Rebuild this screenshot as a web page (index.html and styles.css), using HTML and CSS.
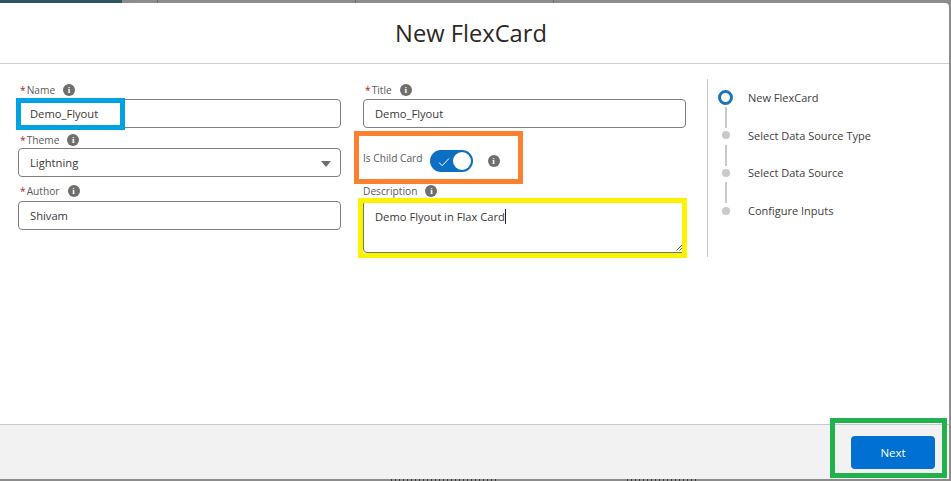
FILE: index.html
```html
<!DOCTYPE html>
<html lang="en">
<head>
<meta charset="utf-8">
<title>New FlexCard</title>
<link rel="stylesheet" href="styles.css">
</head>
<body>
<div class="backdrop">
  <div class="tabs">
    <span class="tab tab-active"></span>
    <span class="tab tab-short"></span>
    <span class="tab tab-wide"></span>
    <span class="tab tab-wide"></span>
    <span class="tab"></span>
  </div>
  <main class="modal">
    <header class="modal-header"><h1>New FlexCard</h1></header>
    <section class="modal-body">
      <div class="column">
        <div class="field">
          <div class="label"><span class="req">*</span>Name<span class="info">i</span></div>
          <div class="input">Demo_Flyout</div>
        </div>
        <div class="field field-theme">
          <div class="label"><span class="req">*</span>Theme<span class="info">i</span></div>
          <div class="input select">Lightning<span class="caret"></span></div>
        </div>
        <div class="field field-author">
          <div class="label"><span class="req">*</span>Author<span class="info">i</span></div>
          <div class="input">Shivam</div>
        </div>
      </div>
      <div class="column">
        <div class="field">
          <div class="label"><span class="req">*</span>Title<span class="info">i</span></div>
          <div class="input">Demo_Flyout</div>
        </div>
        <div class="toggle-row">
          <span class="toggle-label">Is Child Card</span>
          <span class="toggle">
            <svg class="check" viewBox="0 0 12 10" width="12" height="10"><path d="M1 5.5 4.2 8.7 11 1.5" fill="none" stroke="#fff" stroke-width="1"/></svg>
            <span class="knob"></span>
          </span>
          <span class="info info-toggle">i</span>
        </div>
        <div class="field field-desc">
          <div class="label">Description<span class="info">i</span></div>
          <div class="input textarea"><span class="desc-text">Demo Flyout in Flax Card</span>
            <svg class="grip" viewBox="0 0 7 7" width="7" height="7"><path d="M0.5 6.5 6.5 0.5M3.5 6.5 6.5 3.5" stroke="#555" stroke-width="1" fill="none"/></svg>
          </div>
        </div>
      </div>
      <nav class="steps">
        <div class="step"><span class="dot-wrap"><span class="ring"></span></span><span>New FlexCard</span></div>
        <div class="step"><span class="dot-wrap"><span class="dot"></span></span><span>Select Data Source Type</span></div>
        <div class="step"><span class="dot-wrap"><span class="dot"></span></span><span>Select Data Source</span></div>
        <div class="step step-last"><span class="dot-wrap"><span class="dot"></span></span><span>Configure Inputs</span></div>
      </nav>
    </section>
    <footer class="modal-footer"><button class="next" type="button">Next</button></footer>
    <div class="mark mark-blue"></div>
    <div class="mark mark-orange"></div>
    <div class="mark mark-yellow"></div>
    <div class="mark mark-green"></div>
  </main>
  <div class="peek">
    <span class="peek-text peek-a"></span>
    <span class="peek-text peek-b"></span>
  </div>
</div>
</body>
</html>
```
FILE: styles.css
```css
* { box-sizing: border-box; }
html, body { margin: 0; height: 100%; }
body { font-family: "Open Sans", "Noto Sans", sans-serif; color: #2b2826; background: #8f8f8f; overflow: hidden; }
.backdrop { width: 951px; height: 481px; display: flex; flex-direction: column; background: #8c8c8c; }
.tabs { height: 3px; display: flex; flex: none; }
.tab { flex: 1; }
.tab-active { flex: none; width: 122px; background: #2f5564; }
.tab-short { flex: none; width: 36px; border-right: 1px solid #6f6f6f; }
.tab-wide { flex: none; width: 198px; border-right: 1px solid #6f6f6f; }
.modal { position: relative; width: 949px; height: 476px; background: #fff; border-radius: 0 4px 0 0; display: flex; flex-direction: column; flex: none; }
.modal-header { height: 61px; border-bottom: 1px solid #cfcfcf; display: flex; align-items: flex-start; justify-content: center; flex: none; }
.modal-header h1 { margin: 14px 0 0 -7px; font-size: 23.7px; line-height: 33px; font-weight: 400; color: #2b2826; }
.modal-body { flex: 1; display: flex; padding: 17px 0 0 18px; align-items: flex-start; }
.column { width: 323px; margin-right: 22px; flex: none; }
.label { font-size: 10.2px; line-height: 18px; height: 18px; color: #5c5a58; display: flex; align-items: center; padding-left: 2px; }
.req { color: #a8242b; margin-right: 1px; }
.info { width: 12px; height: 12px; border-radius: 50%; background: #706e6b; color: #fff; font-size: 9px; line-height: 12px; font-weight: 700; text-align: center; margin-left: 8px; font-family: "Liberation Serif", serif; flex: none; }
.input { height: 29px; border: 1px solid #80807f; border-radius: 4px; padding-left: 11px; font-size: 11.2px; line-height: 27px; color: #3a3836; position: relative; background: #fff; }
.field-theme { margin-top: 3px; }
.field-theme .label { margin-bottom: -1px; }
.field-author { margin-top: 5px; }
.field-author .label { margin-bottom: 1px; }
.select .caret { position: absolute; right: 9px; top: 12px; width: 0; height: 0; border-left: 5.5px solid transparent; border-right: 5.5px solid transparent; border-top: 6px solid #706e6b; }
.toggle-row { height: 49px; margin-top: 8px; display: flex; align-items: center; }
.toggle-label { font-size: 10.2px; color: #5c5a58; margin-bottom: 5px; }
.toggle { width: 43px; height: 22px; border-radius: 11px; background: #0b6fc4; margin-left: 7px; position: relative; display: block; }
.check { position: absolute; left: 8px; top: 7px; }
.knob { position: absolute; right: 2px; top: 2px; width: 18px; height: 18px; border-radius: 50%; background: #fff; }
.info-toggle { margin-left: 15px; margin-bottom: -1px; }
.field-desc { margin-top: -3px; }
.field-desc .label { padding-left: 0; }
.textarea { height: 53px; border-color: #5f7f6a; padding-top: 3px; line-height: 26px; }
.desc-text { border-right: 1px solid #2b1a40; }
.grip { position: absolute; right: 2px; bottom: 1px; }
.steps { height: 178px; margin: -2px 0 0 -1px; border-left: 1px solid #c9c9c9; padding-left: 10px; font-size: 11px; color: #3e3e3c; }
.step { height: 37.6px; display: flex; align-items: center; position: relative; }
.dot-wrap { width: 15px; display: flex; justify-content: center; margin-right: 15px; flex: none; position: relative; z-index: 1; }
.step::after { content: ""; position: absolute; left: 7px; top: 28px; width: 2px; height: 21px; background: #c9c9c9; }
.step-last::after { display: none; }
.ring { width: 15px; height: 15px; border: 3px solid #1b76bd; border-radius: 50%; background: #fff; }
.dot { width: 8px; height: 8px; border-radius: 50%; background: #c9c9c9; }
.modal-footer { height: 55px; border-top: 1px solid #c9c9c9; background: #f2f2f2; flex: none; display: flex; justify-content: flex-end; align-items: flex-start; padding: 11px 14px 0 0; }
.next { width: 84px; height: 33px; background: #0070d2; color: #fff; border: 0; border-radius: 4px; font: 400 11.5px "Open Sans", sans-serif; }
.mark { position: absolute; border-style: solid; border-width: 5px; }
.mark-blue { left: 16px; top: 95px; width: 109px; height: 32px; border-color: #00a2e2; }
.mark-orange { left: 354px; top: 128px; width: 169px; height: 53px; border-color: #fb8130; }
.mark-yellow { left: 358px; top: 195px; width: 329px; height: 60px; border-color: #fff200; }
.mark-green { left: 830px; top: 415px; width: 117px; height: 60px; border-color: #22b14c; }
.peek { height: 2px; display: flex; padding-left: 391px; flex: none; }
.peek-text { height: 2px; background: repeating-linear-gradient(90deg, #3a3a3a 0 1px, transparent 1px 4px); }
.peek-a { width: 106px; margin-right: 130px; }
.peek-b { width: 72px; }
```
